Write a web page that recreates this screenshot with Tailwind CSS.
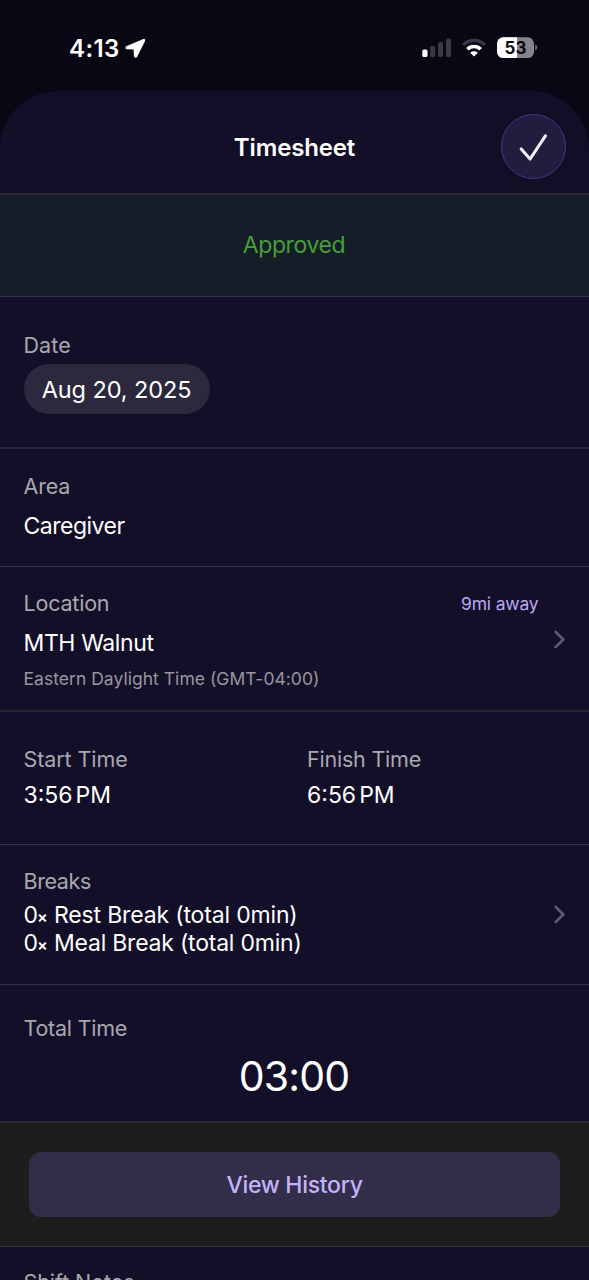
<!DOCTYPE html>
<html lang="en">
<head>
<meta charset="utf-8">
<title>Timesheet</title>
<script src="https://cdn.jsdelivr.net/npm/@tailwindcss/browser@4"></script>
</head>
<body class="bg-[#090713]">
<div class="flex h-[1280px] w-[589px] flex-col overflow-hidden bg-[#090713] font-['Inter','Liberation_Sans',sans-serif] text-white">

  <!-- Status bar -->
  <div class="flex h-[91px] shrink-0 items-start justify-between pt-9 pr-[51px] pl-[69px]">
    <div class="flex h-6 items-center gap-[5px]">
      <span class="pt-[2px] text-[24px] leading-6 font-semibold tracking-[0.4px]">4:13</span>
      <svg class="h-[22px] w-[21px]" viewBox="0 0 21 22"><path d="M18.6 2.6 L1.6 10 Q0.8 11.2 2 11.6 L9.4 11.8 L9.6 19 Q10.4 20.6 11.5 19.4 L19.4 3.6 Q19.6 2.2 18.6 2.6Z" fill="#fff" stroke="#fff" stroke-width="1.5" stroke-linejoin="round"/></svg>
    </div>
    <div class="flex h-6 items-center">
      <svg class="h-[24px] w-[116px]" viewBox="0 0 116 24">
        <rect x="0.3" y="13.5" width="5.2" height="7.5" rx="1.6" fill="#fff"/>
        <rect x="8.2" y="10" width="5" height="11" rx="1.6" fill="#3a3842"/>
        <rect x="16" y="6" width="5" height="15" rx="1.6" fill="#3a3842"/>
        <rect x="24" y="2.5" width="5" height="18.5" rx="1.6" fill="#3a3842"/>
        <path d="M41.2 8.7 A15.6 15.6 0 0 1 62.8 8.7" fill="none" stroke="#3a3842" stroke-width="3.4"/>
        <path d="M45.4 13.2 A9.4 9.4 0 0 1 58.6 13.2" fill="none" stroke="#fff" stroke-width="3.7"/>
        <path d="M52 20.4 L48.2 16.7 A5.6 5.6 0 0 1 55.8 16.7Z" fill="#fff"/>
        <clipPath id="charge"><rect x="75" y="1.3" width="37" height="20.8" rx="6.4"/></clipPath>
        <g clip-path="url(#charge)"><rect x="75" y="1" width="37" height="22" fill="#858389"/><rect x="75" y="1" width="20" height="22" fill="#fff"/></g>
        <path d="M113.3 8.6 Q115.3 9.4 115.3 11.6 Q115.3 13.8 113.3 14.6Z" fill="#6f6d74"/>
        <text x="93.5" y="18" text-anchor="middle" font-size="17" font-weight="700" fill="#0b0915">53</text>
      </svg>
    </div>
  </div>

  <!-- Sheet -->
  <main class="flex grow flex-col overflow-hidden rounded-t-[58px] bg-[#140f29]">
    <header class="grid h-[104px] shrink-0 grid-cols-[1fr_auto_1fr] items-center overflow-hidden border-b-2 border-[#2b2936] px-[23px] pt-[9px]">
      <span></span>
      <h1 class="pt-[2px] text-[24px] leading-8 font-semibold tracking-[-0.15px]">Timesheet</h1>
      <button class="flex size-[65px] items-center justify-center justify-self-end rounded-full border-[1.5px] border-[#45388a] bg-[#231c3e] shadow-[0_6px_28px_8px_rgba(16,14,28,0.35)]" aria-label="Done">
        <svg class="size-[32px]" viewBox="0 0 32 32" fill="none" stroke="#f3effc" stroke-width="3.1" stroke-linecap="round" stroke-linejoin="round"><path d="M3.2 18 L12.1 28 L27.4 4.8"/></svg>
      </button>
    </header>

    <div class="flex h-[102px] shrink-0 items-center justify-center border-b border-[#32333e] bg-[#171d28] pr-px pb-px text-[23px] leading-8 tracking-[-0.38px] text-[#43a036]">Approved</div>

    <section class="flex h-[152px] shrink-0 flex-col items-start border-b-2 border-[#292535] pt-[34px] pl-[23.5px]">
      <div class="text-[21.5px] leading-7 tracking-[0.1px] text-[#a9a7ae]">Date</div>
      <div class="mt-[5px] flex h-[50px] w-[186px] items-center justify-center rounded-full bg-[#2c283d] pt-px text-[23.5px] leading-8 tracking-[-0.1px]">Aug 20, 2025</div>
    </section>

    <section class="h-[118px] shrink-0 border-b border-[#33303d] pt-[23px] pl-[23.5px]">
      <div class="text-[21.5px] leading-7 tracking-[-0.2px] text-[#a9a7ae]">Area</div>
      <div class="mt-[10px] text-[23px] leading-8 tracking-[-0.5px]">Caregiver</div>
    </section>

    <section class="flex h-[145px] shrink-0 border-b-2 border-[#292535] pt-[22px] pr-[22px] pl-[23.5px]">
      <div class="grow">
        <div class="text-[21.5px] leading-7 tracking-[-0.2px] text-[#a9a7ae]">Location</div>
        <div class="mt-[10px] text-[23px] leading-8 tracking-[-0.38px]">MTH Walnut</div>
        <div class="mt-2 text-[17.5px] leading-6 tracking-[0.03px] text-[#98969f]">Eastern Daylight Time (GMT-04:00)</div>
      </div>
      <div class="mr-[14.5px] pt-px text-[17.5px] leading-7 tracking-[-0.18px] text-[#bba8f0]">9mi away</div>
      <svg class="mt-[40px] h-[20px] w-[14px]" viewBox="0 0 14 20" fill="none" stroke="#5f5b6d" stroke-width="2.6" stroke-linecap="round" stroke-linejoin="round"><path d="M2.6 2.8 L10.3 10.5 L2.6 18.2"/></svg>
    </section>

    <section class="grid h-[133px] shrink-0 grid-cols-[283.5px_1fr] border-b border-[#33303d] pt-[33px] pl-[23.5px]">
      <div>
        <div class="text-[21.5px] leading-7 tracking-[-0.08px] text-[#a9a7ae]">Start Time</div>
        <div class="mt-[6px] flex gap-[3px] text-[23px] leading-8"><span>3:56</span><span>PM</span></div>
      </div>
      <div>
        <div class="text-[21.5px] leading-7 tracking-[-0.22px] text-[#a9a7ae]">Finish Time</div>
        <div class="mt-[6px] flex gap-[3px] text-[23px] leading-8"><span>6:56</span><span>PM</span></div>
      </div>
    </section>

    <section class="flex h-[140px] shrink-0 items-start justify-between border-b border-[#33303d] pt-[22px] pr-[22px] pl-[23.5px]">
      <div>
        <div class="text-[21.5px] leading-7 tracking-[-0.4px] text-[#a9a7ae]">Breaks</div>
        <div class="mt-[6px] flex h-7 text-[23px] leading-7"><span class="w-[13.5px]">0</span><span class="w-[17px] pt-[2px] text-[16px] font-semibold">×</span><span class="tracking-[-0.16px]">Rest Break (total 0min)</span></div>
        <div class="flex h-7 text-[23px] leading-7"><span class="w-[13.5px]">0</span><span class="w-[17px] pt-[2px] text-[16px] font-semibold">×</span><span class="tracking-[-0.22px]">Meal Break (total 0min)</span></div>
      </div>
      <svg class="mt-[37px] h-[20px] w-[14px]" viewBox="0 0 14 20" fill="none" stroke="#5f5b6d" stroke-width="2.6" stroke-linecap="round" stroke-linejoin="round"><path d="M2.6 2.8 L10.3 10.5 L2.6 18.2"/></svg>
    </section>

    <section class="h-[138px] shrink-0 border-b-2 border-[#292535] pt-[29px]">
      <div class="pl-[23.5px] text-[21.5px] leading-7 tracking-[-0.25px] text-[#a9a7ae]">Total Time</div>
      <div class="mt-[10px] pr-px text-center text-[41px] leading-12 tracking-[-0.8px]">03:00</div>
    </section>

    <div class="h-[124px] shrink-0 border-b border-[#343338] bg-[#1d1d1d] px-[29px] pt-[29px]">
      <button class="flex h-[65px] w-full items-center justify-center rounded-[12px] bg-[#322d49] text-[23px] leading-8 font-medium tracking-[-0.3px] text-[#c4b2f8]">View History</button>
    </div>

    <section class="grow overflow-hidden pt-[21px] pl-[23.5px]">
      <div class="text-[21.5px] leading-7 tracking-[-0.07px] text-[#a9a7ae]">Shift Notes</div>
    </section>
  </main>
</div>
</body>
</html>
